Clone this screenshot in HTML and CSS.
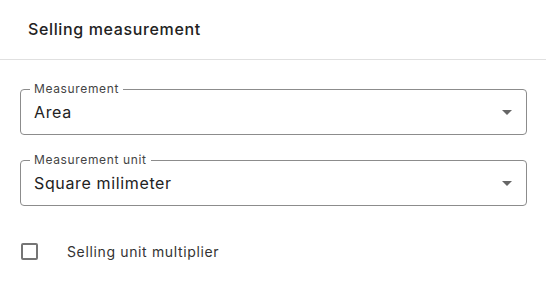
FILE: index.html
```html
<!DOCTYPE html>
<html lang="en">
<head>
    <meta charset="UTF-8">
    <meta name="viewport" content="width=device-width, initial-scale=1.0">
    <title>Selling measurement</title>
    <link rel="stylesheet" href="styles.css">
</head>
<body>
    <div class="panel">
        <div class="panel-header">Selling measurement</div>
        <div class="panel-body">
            <div class="select-field">
                <span class="field-label">Measurement</span>
                <span class="select-value">Area</span>
                <span class="select-arrow"></span>
            </div>
            <div class="select-field">
                <span class="field-label">Measurement unit</span>
                <span class="select-value">Square milimeter</span>
                <span class="select-arrow"></span>
            </div>
            <label class="check-row">
                <span class="checkbox"></span>
                <span class="check-label">Selling unit multiplier</span>
            </label>
        </div>
    </div>
</body>
</html>
```

FILE: styles.css
```css
body {
    margin: 0;
    font-family: Inter, "Noto Sans", sans-serif;
    letter-spacing: 0.04em;
    background-color: #fff;
    color: #222;
}
.panel {
    width: 546px;
}
.panel-header {
    height: 60px;
    padding: 0 28px 2px;
    display: flex;
    align-items: center;
    box-sizing: border-box;
    font-size: 16px;
    font-weight: 500;
    color: #222;
    border-bottom: 1px solid #e0e0e0;
}
.panel-body {
    padding: 29px 19px 0 20px;
    display: flex;
    flex-direction: column;
    gap: 25px;
}
.select-field {
    position: relative;
    height: 46px;
    box-sizing: border-box;
    padding: 0 13px;
    display: flex;
    align-items: center;
    justify-content: space-between;
    border: 1px solid #8c8c8c;
    border-radius: 4px;
}
.field-label {
    position: absolute;
    left: 9px;
    top: -9px;
    padding: 0 4px;
    background-color: #fff;
    font-size: 12px;
    line-height: 16px;
    color: #444;
}
.select-value {
    font-size: 16px;
    color: #222;
}
.select-arrow {
    width: 0;
    height: 0;
    margin-right: 1px;
    border-left: 5px solid transparent;
    border-right: 5px solid transparent;
    border-top: 5px solid #666;
}
.check-row {
    display: flex;
    align-items: center;
    margin-top: 12px;
}
.checkbox {
    width: 13px;
    height: 13px;
    border: 2px solid #757575;
    border-radius: 2px;
    margin-left: 1px;
}
.check-label {
    margin-left: 29px;
    font-size: 14px;
    color: #333;
}
```
